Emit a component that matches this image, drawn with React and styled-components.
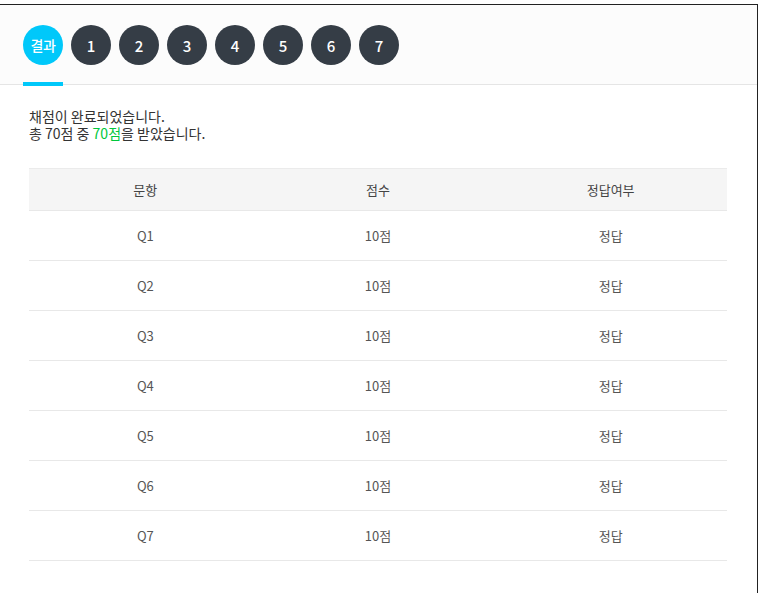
import React from "react";
import styled, { createGlobalStyle } from "styled-components";

const Global = createGlobalStyle`
  html, body { margin: 0; padding: 0; background: #fff; }
  body { font-family: "Noto Sans CJK KR", "Noto Sans", sans-serif; }
`;

const Frame = styled.div`
  margin-top: 4px;
  width: 758px;
  min-height: 589px;
  box-sizing: border-box;
  border-top: 1px solid #222;
  border-right: 1px solid #222;
  background: #fff;
`;

const Header = styled.div`
  display: flex;
  gap: 8px;
  height: 80px;
  box-sizing: border-box;
  padding: 20px 0 0 23px;
  background: #fcfcfc;
  border-bottom: 1px solid #e5e5e5;
`;

const TabItem = styled.div`
  position: relative;
  height: 60px;
  width: 40px;
  &::after {
    content: "";
    position: absolute;
    left: 0;
    right: 0;
    bottom: -1px;
    height: 4px;
    background: ${(p) => (p.$active ? "#00c8fa" : "transparent")};
  }
`;

const Circle = styled.div`
  width: 40px;
  height: 40px;
  border-radius: 50%;
  display: flex;
  align-items: center;
  justify-content: center;
  background: ${(p) => (p.$active ? "#00c8fa" : "#353d46")};
  color: #fff;
  font-size: ${(p) => (p.$active ? "14px" : "15px")};
  font-weight: 500;
  letter-spacing: ${(p) => (p.$active ? "-0.5px" : "0")};
`;

const Content = styled.div`
  padding: 23px 30px 0 29px;
`;

const Message = styled.div`
  font-size: 14px;
  line-height: 17px;
  color: #333;
`;

const Line = styled.div``;

const Green = styled.span`
  color: #00c73c;
`;

const Table = styled.div`
  margin-top: 26px;
  border-top: 1px solid #ebebeb;
`;

const Row = styled.div`
  display: grid;
  grid-template-columns: 1fr 1fr 1fr;
  height: ${(p) => (p.$head ? "42px" : "50px")};
  box-sizing: border-box;
  align-items: center;
  background: ${(p) => (p.$head ? "#f5f5f5" : "#fff")};
  border-bottom: 1px solid #e8e8e8;
  font-size: 13px;
  color: ${(p) => (p.$head ? "#444" : "#555")};
`;

const Cell = styled.div`
  text-align: center;
`;

const rows = [1, 2, 3, 4, 5, 6, 7];

export default function App() {
  return (
    <>
      <Global />
      <Frame>
        <Header>
          <TabItem $active>
            <Circle $active>결과</Circle>
          </TabItem>
          {rows.map((n) => (
            <TabItem key={n}>
              <Circle>{n}</Circle>
            </TabItem>
          ))}
        </Header>
        <Content>
          <Message>
            <Line>채점이 완료되었습니다.</Line>
            <Line>
              총 70점 중 <Green>70점</Green>을 받았습니다.
            </Line>
          </Message>
          <Table>
            <Row $head>
              <Cell>문항</Cell>
              <Cell>점수</Cell>
              <Cell>정답여부</Cell>
            </Row>
            {rows.map((n) => (
              <Row key={n}>
                <Cell>Q{n}</Cell>
                <Cell>10점</Cell>
                <Cell>정답</Cell>
              </Row>
            ))}
          </Table>
        </Content>
      </Frame>
    </>
  );
}
